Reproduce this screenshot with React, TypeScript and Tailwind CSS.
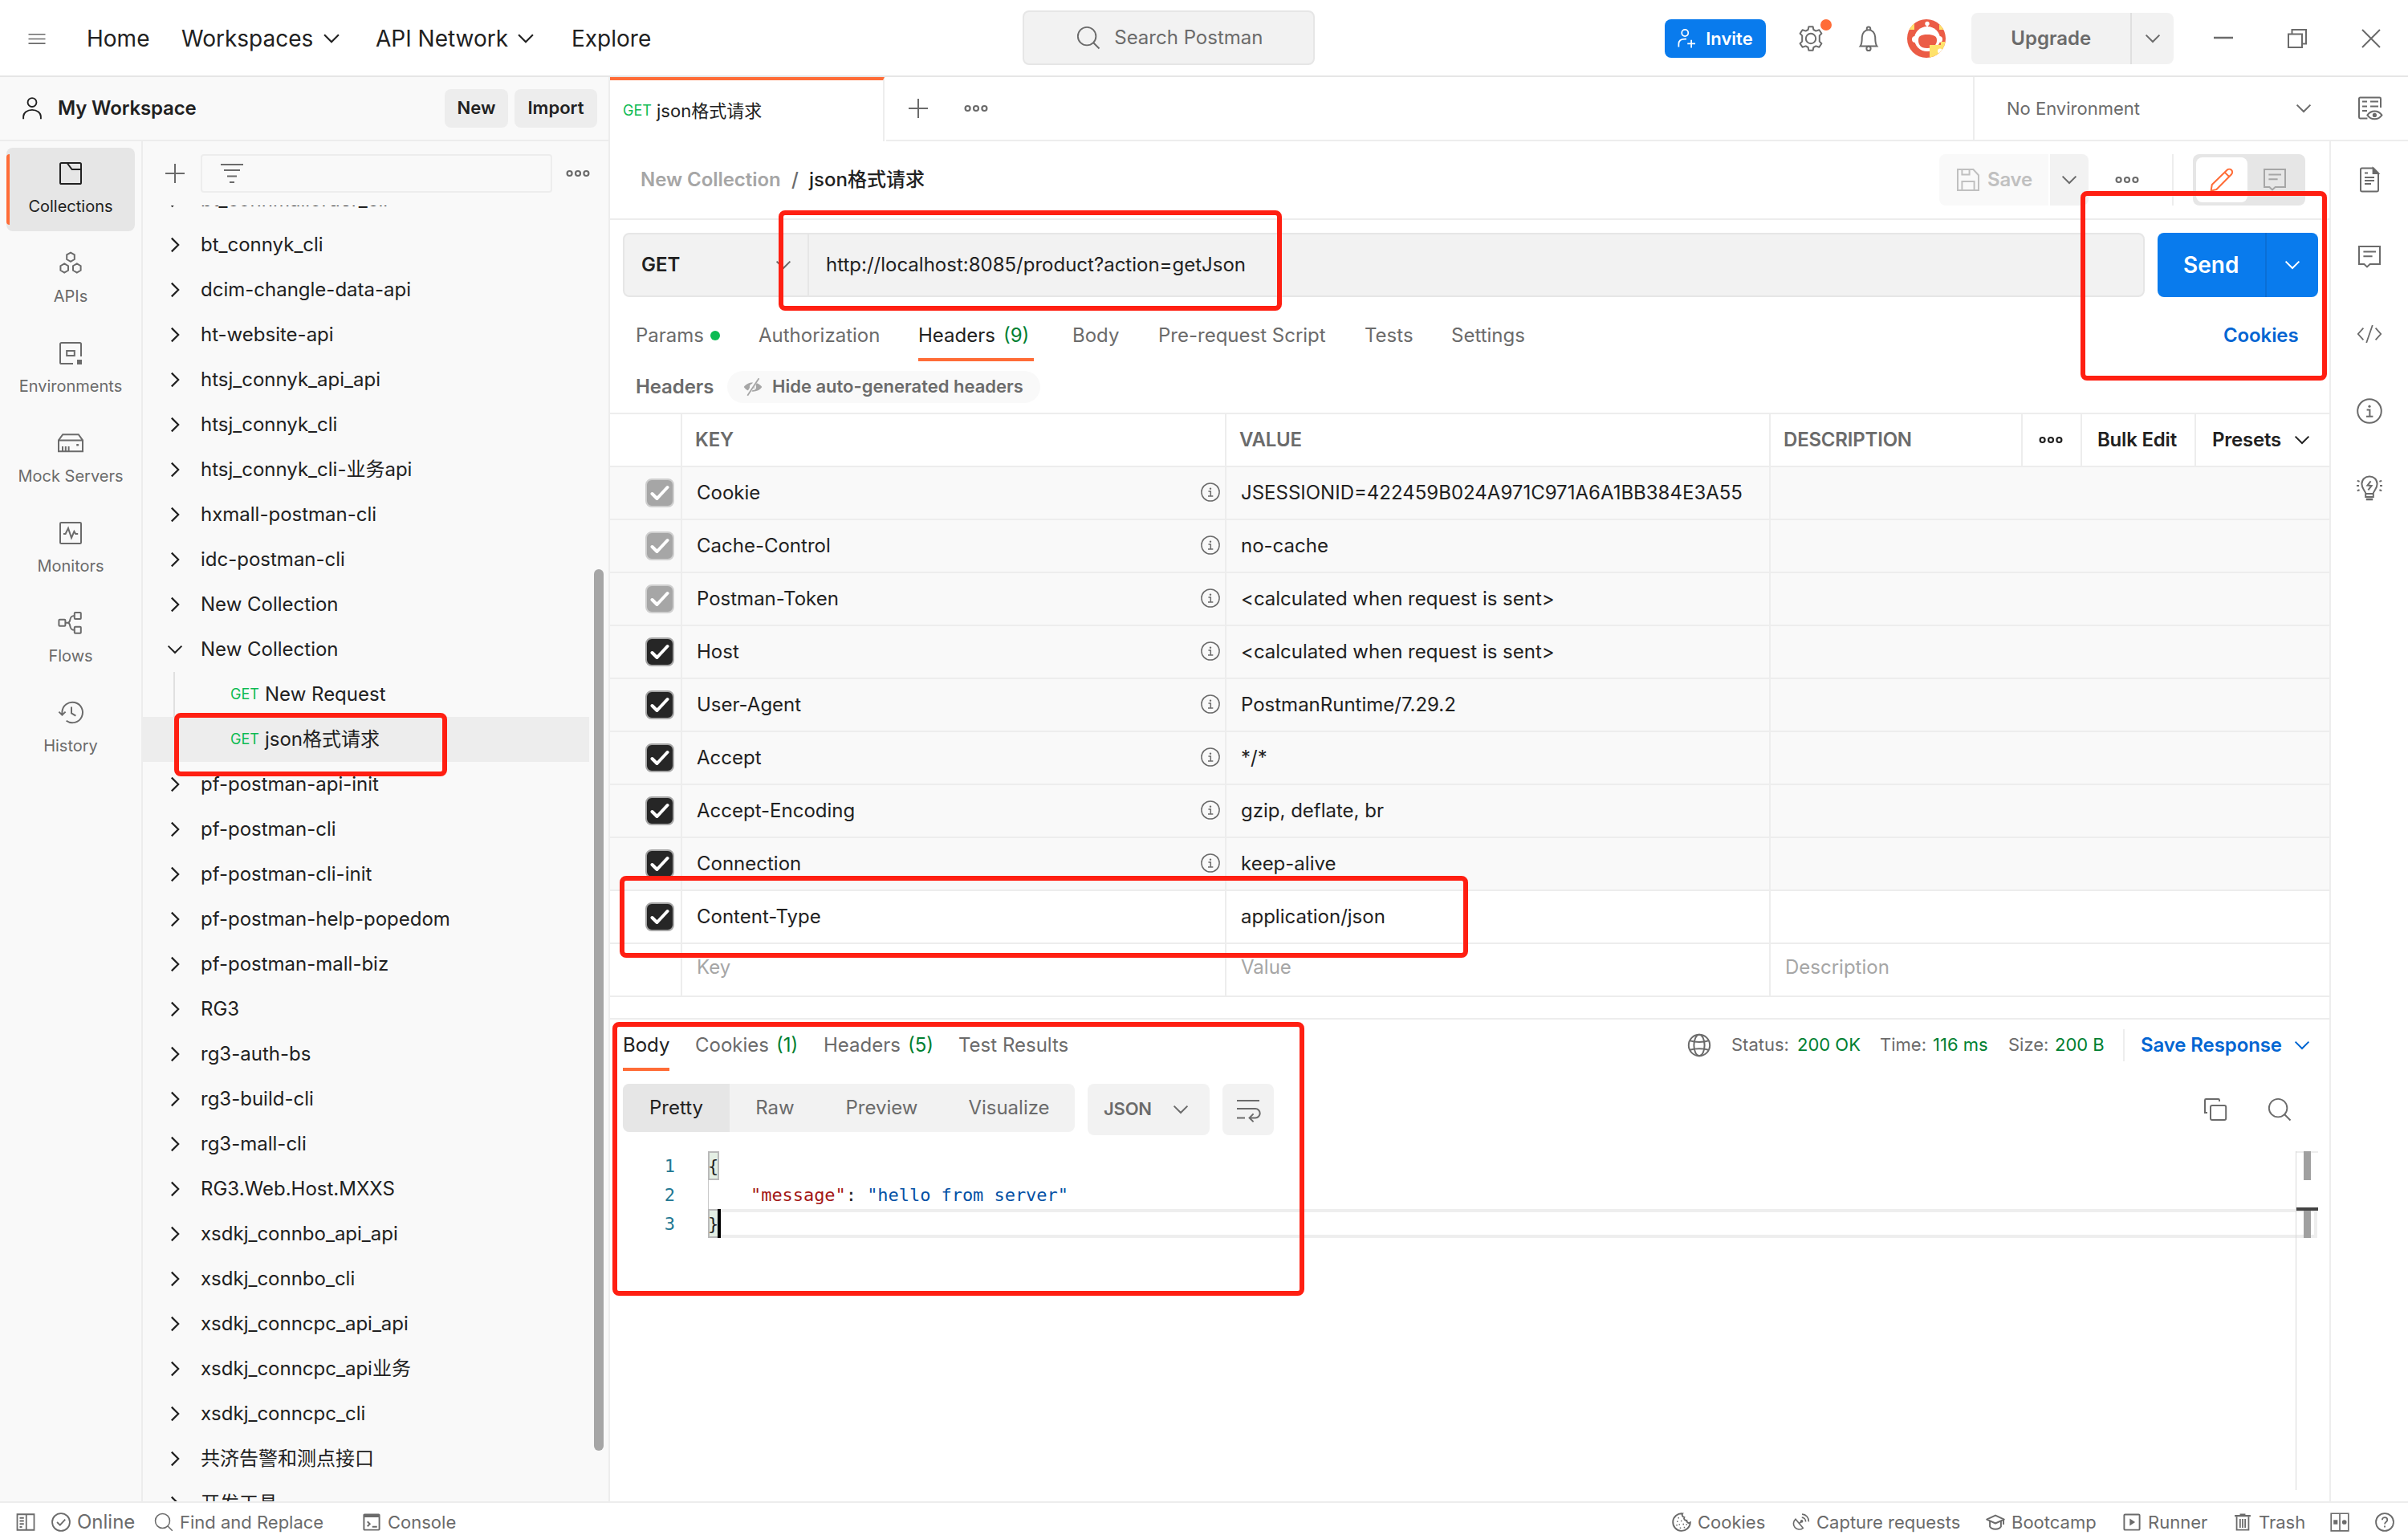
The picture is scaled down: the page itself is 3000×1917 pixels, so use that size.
import type { ReactNode } from 'react';
import clsx from 'clsx';

const navItems = [
  { label: 'Collections', icon: 'collections', active: true },
  { label: 'APIs', icon: 'apis' },
  { label: 'Environments', icon: 'environments' },
  { label: 'Mock Servers', icon: 'mock' },
  { label: 'Monitors', icon: 'monitors' },
  { label: 'Flows', icon: 'flows' },
  { label: 'History', icon: 'history' },
];

const collectionsBefore = [
  'bt_connmallorder_cli',
  'bt_connyk_cli',
  'dcim-changle-data-api',
  'ht-website-api',
  'htsj_connyk_api_api',
  'htsj_connyk_cli',
  'htsj_connyk_cli-业务api',
  'hxmall-postman-cli',
  'idc-postman-cli',
  'New Collection',
];

const collectionsAfter = [
  'pf-postman-api-init',
  'pf-postman-cli',
  'pf-postman-cli-init',
  'pf-postman-help-popedom',
  'pf-postman-mall-biz',
  'RG3',
  'rg3-auth-bs',
  'rg3-build-cli',
  'rg3-mall-cli',
  'RG3.Web.Host.MXXS',
  'xsdkj_connbo_api_api',
  'xsdkj_connbo_cli',
  'xsdkj_conncpc_api_api',
  'xsdkj_conncpc_api业务',
  'xsdkj_conncpc_cli',
  '共济告警和测点接口',
  '开发工具',
];

const headers = [
  { key: 'Cookie', value: 'JSESSIONID=422459B024A971C971A6A1BB384E3A55', auto: true, locked: true },
  { key: 'Cache-Control', value: 'no-cache', auto: true, locked: true },
  { key: 'Postman-Token', value: '<calculated when request is sent>', auto: true, locked: true },
  { key: 'Host', value: '<calculated when request is sent>', auto: true },
  { key: 'User-Agent', value: 'PostmanRuntime/7.29.2', auto: true },
  { key: 'Accept', value: '*/*', auto: true },
  { key: 'Accept-Encoding', value: 'gzip, deflate, br', auto: true },
  { key: 'Connection', value: 'keep-alive', auto: true },
  { key: 'Content-Type', value: 'application/json' },
];

// All glyphs sit on a 16 unit grid, one unit is two pixels at the default size
const glyphs: Record<string, ReactNode> = {
  menu: <path d="M2 5h12M2 8.25h12M2 11.5h12" strokeWidth="0.9" />,
  down: <path d="M3.8 5.8 8 10l4.2-4.2" />,
  right: <path d="M5.9 3.8 10.1 8l-4.2 4.2" strokeWidth="1.1" />,
  plus: <path d="M8 2v12M2 8h12" />,
  dots: (
    <>
      <circle cx="2.8" cy="8" r="1.5" strokeWidth="1.1" />
      <circle cx="8" cy="8" r="1.5" strokeWidth="1.1" />
      <circle cx="13.2" cy="8" r="1.5" strokeWidth="1.1" />
    </>
  ),
  search: (
    <>
      <circle cx="7" cy="7" r="6" />
      <path d="m11.2 11.2 4 4" />
    </>
  ),
  person: (
    <>
      <circle cx="8" cy="4" r="2.9" />
      <path d="M2.2 15v-1.500a5.800 4.500 0 0 1 11.600 0V15" />
    </>
  ),
  invite: (
    <>
      <circle cx="7" cy="4" r="2.300" />
      <path d="M2.500 14v-2.200C2.500 9.500 4 8.300 7 8.300h1M11.500 9v5.500M8.700 11.700h5.600" />
    </>
  ),
  gear: (
    <>
      <circle cx="8" cy="8" r="3.100" />
      <path
        strokeLinejoin="round"
        d="M6.700.6h2.600l.4 1.900 1.500.8 2-.7 1.500 2.300-1.300 1.300v3.600l1.300 1.300-1.500 2.300-2-.7-1.500.8-.4 1.900H6.700l-.4-1.900-1.500-.8-2 .7-1.500-2.300 1.300-1.300V6.200L1.300 4.900l1.500-2.300 2 .7 1.500-.8z"
      />
    </>
  ),
  bell: (
    <>
      <path d="M2.800 12.800c1.200-1.600 1-3.400 1.100-5.800C4 4.700 5.600 2.600 8 2.600s4 2.100 4.100 4.400c.1 2.400-.1 4.200 1.100 5.800z" />
      <path d="M6.900 2.600v-.8a1.100 1.100 0 0 1 2.200 0v.8" />
      <circle cx="8" cy="14.200" r="1.300" />
    </>
  ),
  filter: <path d="M1 2.500h14M3 6h10M5 9.700h6M6.500 13.500h3" />,
  collections: (
    <>
      <rect x="1.500" y="1.500" width="13" height="13" rx="0.8" />
      <path d="m5.800 1.500 3 4h5.700" />
    </>
  ),
  apis: (
    <>
      <path d="m8 1.300 2.400 1.400v2.800L8 6.900 5.600 5.500V2.700zM4.100 8.200l2.400 1.400v2.800l-2.400 1.400-2.400-1.400V9.600zM11.900 8.200l2.400 1.400v2.800l-2.400 1.400-2.400-1.400V9.600z" />
    </>
  ),
  environments: (
    <>
      <path d="M9.500 14.500h-7.200a.8.8 0 0 1-.8-.8V2.300a.8.8 0 0 1 .8-.8h11.400a.8.8 0 0 1 .8.8V10" />
      <rect x="5.600" y="6.500" width="4.800" height="3" />
      <rect x="12" y="12" width="3" height="3" fill="currentColor" stroke="none" />
    </>
  ),
  mock: (
    <path d="M.5 6.200 3.100 2.600h9.800l2.600 3.600v6.900H.5zM.5 6.300h15M3 13v-3M4.900 13v-3M6.800 13v-3M12.200 8.500v1.300M11.600 9.100h1.500" />
  ),
  monitors: (
    <>
      <rect x="1.500" y="1.500" width="13" height="13" rx="0.6" />
      <path d="M3.500 8.500h1.300L6.500 5l2 6 1.700-4 .9 1.500h1.500" />
    </>
  ),
  flows: (
    <>
      <rect x="0.700" y="5.900" width="4" height="4" rx="0.5" />
      <rect x="10.400" y="1.500" width="4" height="4" rx="0.5" />
      <rect x="10.400" y="10.400" width="4" height="4" rx="0.5" />
      <path d="M4.700 7.900h2.600M10.400 3.500c-4.200 0-1.600 4.400-4.200 4.400 2.600 0 0 4.500 4.200 4.500" />
    </>
  ),
  history: (
    <>
      <path d="M2.700 9.300V7.500a6.400 6.400 0 1 1 2.600 5.400M.7 7.300l2 2 2.100-2M8.500 4.200v4l2.700 1.600" />
    </>
  ),
  envQuick: (
    <>
      <path d="M15 7.500V2a.7.7 0 0 0-.7-.7H2.200a.7.7 0 0 0-.7.700v11.500c0 .4.300.7.700.7h4.500M3.500 3.800h3M8.500 3.800h5M3.500 6.700h3M8.500 6.700h5M3.500 9.500h3" />
      <path d="M6.700 12.200c2.200-3.300 6.800-3.300 9 0-2.200 3.300-6.800 3.300-9 0z" />
      <circle cx="11.200" cy="12.200" r="1.300" fill="currentColor" stroke="none" />
    </>
  ),
  doc: (
    <>
      <path d="M10.500.8H3.200a.7.7 0 0 0-.7.7v13c0 .4.300.7.7.7h9.600c.4 0 .7-.3.7-.7V3.800z" />
      <path d="M10.300.8v3.200h3.200z" fill="currentColor" />
      <path d="M5 3.800h2M5 6.500h6M5 8.500h6M5 10.500h4" />
    </>
  ),
  comment: (
    <path d="M1.500 1.500h13v11H8.300l-1.800 1.700-1.800-1.700H1.500zM4.200 4.800h7.800M4.200 7.600h5.600" />
  ),
  code: <path d="M4.200 4.300.9 8l3.300 3.700M11.800 4.300 15.100 8l-3.300 3.700M9.900 2.500l-3.800 11" strokeWidth="0.9" />,
  info: (
    <>
      <circle cx="8" cy="8" r="7.400" />
      <path d="M6.300 7.300h1.900v4M6 11.400h4.200" />
      <circle cx="8" cy="5.100" r="0.800" fill="currentColor" stroke="none" />
    </>
  ),
  bulb: (
    <>
      <path d="M5.700 11.500C5.500 9.800 3.200 8.500 3.200 5.400A4.700 4.700 0 0 1 8 .7a4.700 4.700 0 0 1 4.800 4.700c0 3.100-2.300 4.400-2.500 6.100zM5.600 11.500h4.800v2H5.600z" />
      <path d="M5.900 15h4.200" strokeWidth="1.300" />
      <path d="M8.800 3.700 6.700 6.300l2.600.2-2.100 2.700M.4 3.300l1.400.6M0 6.500h1.500M.4 9.600l1.400-.5M15.600 3.300l-1.400.6M16 6.500h-1.500M15.600 9.600l-1.400-.5" />
    </>
  ),
  save: (
    <path d="M1.500 1.500h9.700l3.300 3.600v9.400h-13zM4.200 1.500v3.300h4.600V1.500M4.200 14.500V9h7.600v5.500" />
  ),
  pencil: (
    <path d="m1.300 14.800.6-3.800L11.300 1.900a1.900 1.900 0 0 1 2.700 2.700L4.700 14zM9.800 3.300l2.800 2.700" strokeLinejoin="round" />
  ),
  eyeOff: (
    <>
      <path d="M.5 8C3.500 3 12.500 3 15.500 8c-3 5-12 5-15 0z" fill="currentColor" stroke="none" />
      <circle cx="8" cy="8" r="2.700" fill="#f9f9f9" stroke="none" />
      <circle cx="8" cy="8" r="1.600" fill="currentColor" stroke="none" />
      <path d="M12 .5 3 15.500" stroke="#f9f9f9" strokeWidth="3" />
      <path d="M13 .8 3.500 15.200" strokeWidth="1.200" />
    </>
  ),
  wrap: <path d="M1 2.500h14M1 7.500h11.500a2.600 2.600 0 0 1 0 5.700H9M1 13.200h5M11.300 10.700 8.800 13.200l2.500 2.500" />,
  globe: (
    <>
      <circle cx="8" cy="8" r="6.600" />
      <ellipse cx="8" cy="8" rx="3.300" ry="6.600" />
      <path d="M2.300 5.200c3 1 8.400 1 11.400 0M2.300 10.900c3-1 8.400-1 11.400 0" />
    </>
  ),
  copy: (
    <>
      <path d="M3 10H1.500V2.200c0-.4.300-.7.700-.7h7.600c.4 0 .7.300.7.700V3" />
      <rect x="5" y="5.500" width="9.600" height="9" rx="1" />
    </>
  ),
  panel: (
    <path d="M1 1.500h14v13H1zM8.500 1.500v13M3 4.500h3.500M3 7h3.500M3 9.500h3.500M3 12h2" strokeWidth="1.200" />
  ),
  check: (
    <>
      <circle cx="8" cy="8" r="7.300" strokeWidth="1.200" />
      <path d="m4.700 8 2.500 2.400L11.500 5.800" strokeWidth="1.200" />
    </>
  ),
  console: (
    <>
      <rect x="1.600" y="1.600" width="12.800" height="12.800" rx="0.500" strokeWidth="1.300" />
      <path d="M1.500 3h13" strokeWidth="2" />
      <path d="m4.500 7.500 2 2-2 2M8.500 11.800h4" strokeWidth="1.300" />
    </>
  ),
  cookie: (
    <>
      <path
        d="M8.800.9A7.200 7.200 0 1 0 15.200 8.300c-1.300.8-3-.1-3-1.700-1.700.1-2.600-1.500-2-2.600C8.700 3.600 8 2.200 8.800.9z"
        strokeWidth="1.300"
      />
      <path
        d="M5 4.500h1M7.300 7h1M4 7.500h1M5.700 10h1M9 9.700h1M3.500 10.500h1M6.500 12.800h1M9.800 12.400h1M11.700 10h1"
        strokeWidth="1.100"
      />
    </>
  ),
  capture: (
    <>
      <path d="M3.600 5.300a5.200 5.200 0 1 0 6.800 8zM7.200 9l2-2" strokeWidth="1.200" />
      <circle cx="9.200" cy="7.200" r="1.300" fill="currentColor" stroke="none" />
      <path d="M9.300 3.700a3.800 3.800 0 0 1 3.500 3.900M9.500.8a6.200 6.200 0 0 1 6 6.800" strokeWidth="1.200" />
    </>
  ),
  bootcamp: (
    <>
      <path d="M8 2.400.8 5.700 8 9l7.200-3.300z" strokeWidth="1.300" strokeLinejoin="round" />
      <path d="M3.400 7.200v4.500c1.500 2.800 7.700 2.800 9.200 0V7.200M14.700 6v4" strokeWidth="1.300" />
    </>
  ),
  runner: (
    <>
      <rect x="1.600" y="1.600" width="12.800" height="12.800" rx="0.800" strokeWidth="1.300" />
      <path d="M6.200 5v6l4.500-3z" fill="currentColor" stroke="none" />
    </>
  ),
  trash: (
    <>
      <path d="M.8 2.200h14.400M5.500 1.200h5" strokeWidth="1.600" />
      <path d="M2.600 3v12h10.800V3M5.700 5v8M8 5v8M10.300 5v8" strokeWidth="1.300" />
    </>
  ),
  split: (
    <>
      <path d="M.8.800h14.400v14.400H.8zM8 .8v14.400" strokeWidth="1.100" />
      <rect x="2.800" y="6.200" width="3.400" height="3.600" fill="currentColor" stroke="none" />
      <circle cx="11.800" cy="8" r="1.900" fill="currentColor" stroke="none" />
    </>
  ),
  help: (
    <>
      <circle cx="8" cy="8" r="7.300" strokeWidth="1.200" />
      <path d="M5.900 6.200c0-2.800 4.300-2.700 4.300-.1 0 1.700-2.200 1.700-2.200 3.500M8 11v1.300" strokeWidth="1.200" />
    </>
  ),
};

function Icon({ name, className }: { name: string; className?: string }) {
  return (
    <svg
      viewBox="0 0 16 16"
      fill="none"
      stroke="currentColor"
      strokeWidth="1"
      className={clsx('shrink-0 overflow-visible', className ?? 'size-8')}
    >
      {glyphs[name]}
    </svg>
  );
}

function Avatar() {
  return (
    <svg viewBox="0 0 48 48" className="size-12 shrink-0">
      <clipPath id="avatar">
        <circle cx="24" cy="24" r="24" />
      </clipPath>
      <g clipPath="url(#avatar)">
        <rect width="48" height="48" fill="#eb5c46" />
        <rect width="9" height="13" fill="#ffe26b" />
        <rect x="40" width="8" height="13" fill="#ffe26b" />
        <ellipse cx="25" cy="24.500" rx="16" ry="15.500" fill="#fff" />
        <rect x="6" y="21" width="38" height="8" rx="4" fill="#fff" />
        <circle cx="25" cy="5.500" r="2.700" fill="#fff" />
        <path d="M24.200 5h1.600v6h-1.600z" fill="#fff" />
        <path d="M14 26c0-5 3-7 11-7s12 2 12 7-3 10-12 10-11-5-11-10z" fill="#eb5c46" />
        <path d="M28 32h14v-4h6v20H28z" fill="#ffe26b" />
        <circle cx="41" cy="39.500" r="3" fill="#fff" />
      </g>
    </svg>
  );
}

function TopBar() {
  return (
    <header className="flex h-24 shrink-0 items-center border-b-2 border-[#e6e6e6] pt-0.5 text-[28px]">
      <Icon name="menu" className="ml-8 h-7 w-7 text-[#6b6b6b]" />
      <span className="ml-12 w-[118px]">Home</span>
      <span className="w-[170px]">Workspaces</span>
      <Icon name="down" className="size-[34px]" />
      <span className="ml-[38px] w-[170px]">API Network</span>
      <Icon name="down" className="size-[34px]" />
      <span className="ml-10">Explore</span>

      <div className="mt-[-2px] ml-[463px] flex h-[68px] w-[364px] items-center rounded-lg border-2 border-[#e6e6e6] bg-[#f2f2f2] pl-[65px] text-2xl text-[#6b6b6b]">
        <Icon name="search" className="size-[30px]" />
        <span className="ml-[17px]">Search Postman</span>
      </div>

      <div className="ml-[436px] flex h-12 w-[126px] items-center rounded-lg bg-[#097bed] pl-[13px] text-[22px] font-semibold text-white">
        <Icon name="invite" className="size-[28px]" />
        <span className="ml-2.5">Invite</span>
      </div>
      <div className="relative ml-10 text-[#6b6b6b]">
        <Icon name="gear" />
        <span className="absolute -top-2 left-7 size-3.5 rounded-full bg-[#ff6c37]" />
      </div>
      <Icon name="bell" className="ml-10 size-8 text-[#6b6b6b]" />
      <div className="ml-8">
        <Avatar />
      </div>
      <div className="ml-8 flex h-16 w-[252px] items-center rounded-lg bg-[#f2f2f2] text-2xl font-semibold text-[#6b6b6b]">
        <span className="w-[198px] text-center">Upgrade</span>
        <span className="flex h-16 flex-1 items-center justify-center border-l-2 border-[#e0e0e0]">
          <Icon name="down" />
        </span>
      </div>
      <svg viewBox="0 0 24 24" className="ml-[50px] size-6" stroke="#6b6b6b" strokeWidth="2" fill="none">
        <path d="M0 11h24" strokeWidth="2.500" />
      </svg>
      <svg viewBox="0 0 24 24" className="ml-[68px] size-6" stroke="#6b6b6b" strokeWidth="2" fill="none">
        <path d="M1 6.500h17V23H1zM5.500 6V1H23v17.500h-4.500" />
      </svg>
      <svg viewBox="0 0 24 24" className="ml-[68px] size-6" stroke="#6b6b6b" strokeWidth="2" fill="none">
        <path d="m1 1 22 22M23 1 1 23" />
      </svg>
    </header>
  );
}

function NavRail() {
  return (
    <nav className="flex w-[178px] shrink-0 flex-col gap-2 border-r-2 border-[#ededed] pt-2 pl-2">
      {navItems.map((item) => (
        <div
          key={item.label}
          className={clsx(
            'relative flex h-[104px] w-40 flex-col items-center rounded-lg pt-4 text-xl',
            item.active ? 'bg-[#e6e6e6] text-[#212121]' : 'text-[#6b6b6b]'
          )}
        >
          {item.active && <span className="absolute top-2 bottom-2 left-0 w-1 rounded-l bg-[#ff6c37]" />}
          <Icon name={item.icon} />
          <span className="mt-[11px] leading-7">{item.label}</span>
        </div>
      ))}
    </nav>
  );
}

function TreeRow({ name, open }: { name: string; open?: boolean }) {
  return (
    <div className="flex h-14 shrink-0 items-center pl-6">
      <Icon name={open ? 'down' : 'right'} />
      <span className="ml-4">{name}</span>
    </div>
  );
}

function RequestRow({ name, selected }: { name: string; selected?: boolean }) {
  return (
    <div className={clsx('flex h-14 w-[556px] shrink-0 items-center pl-[38px]', selected && 'bg-[#ededed]')}>
      <span className={clsx('h-14 w-[71px] border-l-2', selected ? 'border-transparent' : 'border-[#e0e0e0]')} />
      <span className="w-[43px] text-lg text-[#0cbb52]">GET</span>
      <span>{name}</span>
    </div>
  );
}

function Sidebar() {
  return (
    <aside className="flex w-[760px] shrink-0 flex-col border-r-2 border-[#ededed] bg-[#f9f9f9]">
      <div className="flex h-20 shrink-0 items-center border-b-2 border-[#ededed] text-2xl font-semibold">
        <Icon name="person" className="ml-[25px] size-[30px]" />
        <span className="ml-[17px] w-[482px] tracking-[-0.15px]">My Workspace</span>
        <span className="flex h-12 w-[79px] items-center justify-center rounded-lg bg-[#ededed] text-[22px]">New</span>
        <span className="ml-2 flex h-12 w-[103px] items-center justify-center rounded-lg bg-[#ededed] text-[22px]">
          Import
        </span>
      </div>
      <div className="flex min-h-0 flex-1">
        <NavRail />
        <div className="flex min-w-0 flex-1 flex-col">
          <div className="flex h-20 shrink-0 items-center pl-6 text-[#6b6b6b]">
            <Icon name="plus" />
            <div className="ml-4 flex h-12 w-[438px] items-center rounded border-2 border-[#ededed] pl-[21px]">
              <Icon name="filter" className="size-8" />
            </div>
            <Icon name="dots" className="ml-4 size-8" />
          </div>
          <div className="relative flex min-h-0 flex-1 overflow-hidden">
            <div className="mt-[-35px] flex flex-1 flex-col text-2xl text-[#212121]">
              {collectionsBefore.map((name) => (
                <TreeRow key={name} name={name} />
              ))}
              <TreeRow name="New Collection" open />
              <RequestRow name="New Request" />
              <RequestRow name="json格式请求" selected />
              {collectionsAfter.map((name) => (
                <TreeRow key={name} name={name} />
              ))}
            </div>
            <div className="absolute top-[453px] right-1.5 h-[1098px] w-3 rounded-full bg-[#a6a6a6]" />
          </div>
        </div>
      </div>
    </aside>
  );
}

function TabBar() {
  return (
    <div className="flex h-20 shrink-0">
      <div className="flex w-[342px] items-center border-t-4 border-r-2 border-t-[#ff6c37] border-r-[#ededed] pl-4">
        <span className="w-[42px] text-lg text-[#0cbb52]">GET</span>
        <span className="text-[22px]">json格式请求</span>
      </div>
      <div className="ml-0.5 flex flex-1 items-center border-b-2 border-[#ededed] text-[#6b6b6b]">
        <Icon name="plus" className="ml-6 size-8" />
        <Icon name="dots" className="ml-10 size-8" />
        <div className="ml-[1226px] flex h-full w-[466px] items-center border-l-2 border-[#ededed] pl-10 text-[22px]">
          <span className="w-[354px]">No Environment</span>
          <Icon name="down" />
        </div>
        <Icon name="envQuick" className="ml-3 size-8" />
      </div>
    </div>
  );
}

function Breadcrumb() {
  return (
    <div className="flex h-[98px] shrink-0 items-center border-b-2 border-[#ededed] pl-[38px] text-2xl font-semibold">
      <span className="w-[188px] tracking-[-0.05px] text-[#a6a6a6]">New Collection</span>
      <span className="w-[22px] font-medium text-[#6b6b6b]">/</span>
      <span className="w-[1408px] font-medium">json格式请求</span>
      <div className="flex h-16 w-[136px] items-center rounded-l-lg bg-[#f9f9f9] pl-5 text-[#c0c0c0]">
        <Icon name="save" />
        <span className="ml-2 tracking-[-0.2px]">Save</span>
      </div>
      <div className="ml-0.5 flex h-16 w-12 items-center justify-center rounded-r-lg bg-[#f2f2f2] text-[#6b6b6b]">
        <Icon name="down" />
      </div>
      <Icon name="dots" className="ml-8 size-8 text-[#6b6b6b]" />
      <div className="ml-10 h-16 w-0.5 bg-[#ededed]" />
      <div className="ml-6 flex h-16 w-[140px] items-center rounded-lg bg-[#e6e6e6]">
        <div className="ml-1 flex h-14 w-16 items-center justify-center rounded-lg bg-white text-[#ff6c37]">
          <Icon name="pencil" />
        </div>
        <Icon name="comment" className="ml-[18px] size-8 text-[#a6a6a6]" />
      </div>
    </div>
  );
}

function RequestLine() {
  return (
    <div className="flex h-24 shrink-0 pt-4 pl-4">
      <div className="flex h-20 w-[1896px] items-center rounded-lg border-2 border-[#e6e6e6] bg-[#f2f2f2] text-2xl">
        <span className="w-[182px] pl-[21px] font-semibold">GET</span>
        <Icon name="down" className="size-8 text-[#6b6b6b]" />
        <span className="ml-3.5 flex h-full items-center border-l-2 border-[#e6e6e6] pl-[21px]">
          http://localhost:8085/product?action=getJson
        </span>
      </div>
      <div className="ml-4 flex h-20 w-[200px] items-center rounded-lg bg-[#097bed] text-[28px] font-semibold text-white">
        <span className="w-[134px] pl-8">Send</span>
        <span className="flex h-full flex-1 items-center border-l-2 border-[#0a6fd6] pl-4">
          <Icon name="down" />
        </span>
      </div>
    </div>
  );
}

const requestTabs = [
  { label: 'Params', width: 'w-[153px]', dot: true },
  { label: 'Authorization', width: 'w-[199px]' },
  { label: 'Headers', width: 'w-36 mr-12', count: 9, active: true },
  { label: 'Body', width: 'w-[107px]' },
  { label: 'Pre-request Script', width: 'w-[257px]' },
  { label: 'Tests', width: 'w-[108px]' },
  { label: 'Settings', width: 'w-[962px]' },
];

function RequestTabs() {
  return (
    <div className="flex h-20 shrink-0 pl-8 text-2xl text-[#6b6b6b]">
      {requestTabs.map((tab) => (
        <span
          key={tab.label}
          className={clsx(
            'flex items-center border-b-4 pt-5',
            tab.width,
            tab.active ? 'border-[#ff6c37] text-[#212121]' : 'border-transparent'
          )}
        >
          {tab.label}
          {tab.dot && <i className="ml-2 size-3 rounded-full bg-[#0cbb52]" />}
          {tab.count && <span className="ml-2.5 text-[#007f31]">({tab.count})</span>}
        </span>
      ))}
      <span className="flex items-center border-b-4 border-transparent pt-5 font-semibold tracking-[-0.1px] text-[#0265d2]">
        Cookies
      </span>
    </div>
  );
}

function Checkbox({ locked }: { locked?: boolean }) {
  return (
    <span
      className={clsx(
        'flex size-9 items-center justify-center rounded-lg border-2',
        locked ? 'border-[#cfcfcf] bg-[#a6a6a6]' : 'border-[#a6a6a6] bg-[#262626]'
      )}
    >
      <svg viewBox="0 0 24 24" className="size-6" fill="none" stroke="#fff" strokeWidth="4" strokeLinecap="round">
        <path d="m2.500 13 6 6L21.500 5" strokeLinejoin="round" />
      </svg>
    </span>
  );
}

function HeadersTable() {
  const row = 'grid h-[66px] grid-cols-[90px_678px_678px_1fr] border-b-2 border-[#ededed]';
  const cell = 'flex items-center border-r-2 border-[#ededed]';
  return (
    <div className="shrink-0 border-t-2 border-[#ededed] text-2xl">
      <div className={clsx(row, 'font-semibold tracking-[-0.2px] text-[#6b6b6b]')}>
        <span className={cell} />
        <span className={clsx(cell, 'pl-4')}>KEY</span>
        <span className={clsx(cell, 'pl-4')}>VALUE</span>
        <div className="flex text-[#212121]">
          <span className={clsx(cell, 'w-[314px] pl-4 text-[#6b6b6b]')}>DESCRIPTION</span>
          <span className={clsx(cell, 'w-[74px] pl-[19px]')}>
            <Icon name="dots" />
          </span>
          <span className={clsx(cell, 'w-[142px] pl-[19px]')}>Bulk Edit</span>
          <span className="flex items-center pl-5">
            <span className="w-[96px]">Presets</span>
            <Icon name="down" />
          </span>
        </div>
      </div>
      {headers.map((h) => (
        <div key={h.key} className={clsx(row, h.auto && 'bg-[#f9f9f9]')}>
          <span className={clsx(cell, 'pl-11')}>
            <Checkbox locked={h.locked} />
          </span>
          <span className={clsx(cell, 'justify-between pr-1.5 pl-[18px]')}>
            {h.key}
            {h.auto && <Icon name="info" className="mb-0.5 size-6 text-[#6b6b6b]" />}
          </span>
          <span className={clsx(cell, 'pl-[18px]')}>{h.value}</span>
          <span />
        </div>
      ))}
      <div className={clsx(row, 'text-[#a6a6a6]')}>
        <span className={cell} />
        <span className={clsx(cell, 'pb-1.5 pl-[18px]')}>Key</span>
        <span className={clsx(cell, 'pb-1.5 pl-[18px]')}>Value</span>
        <span className="flex items-center pb-1.5 pl-[18px]">Description</span>
      </div>
    </div>
  );
}

function ResponseBar() {
  return (
    <div className="mt-[26px] flex h-[66px] shrink-0 border-t-2 border-[#ededed] pl-4 text-2xl text-[#6b6b6b]">
      <span className="mr-8 flex w-[58px] items-center border-b-4 border-[#ff6c37] pt-1 text-[#212121]">Body</span>
      <span className="flex w-[160px] items-center">
        Cookies <span className="ml-[9px] text-[#007f31]">(1)</span>
      </span>
      <span className="flex w-[168px] items-center">
        Headers <span className="ml-[9px] text-[#007f31]">(5)</span>
      </span>
      <span className="flex w-[907px] items-center">Test Results</span>
      <div className="flex items-center text-[22px]">
        <Icon name="globe" />
        <span className="ml-6 w-[82px]">Status:</span>
        <span className="w-[103px] text-[#007f31]">200 OK</span>
        <span className="w-[66px]">Time:</span>
        <span className="w-[94px] text-[#007f31]">116 ms</span>
        <span className="w-[58px]">Size:</span>
        <span className="w-[85px] text-[#007f31]">200 B</span>
        <span className="h-10 w-0.5 bg-[#ededed]" />
        <span className="ml-5 w-[185px] text-2xl font-semibold tracking-[-0.1px] text-[#0265d2]">Save Response</span>
        <Icon name="down" className="size-8 text-[#0265d2]" />
      </div>
    </div>
  );
}

function ResponseTools() {
  return (
    <div className="mt-4 flex h-16 shrink-0 items-center pl-4 text-2xl text-[#6b6b6b]">
      <div className="mb-1 flex h-[60px] w-[563px] overflow-hidden rounded-lg bg-[#f2f2f2] *:flex *:items-center *:justify-center">
        <span className="w-[133px] bg-[#e6e6e6] text-[#212121]">Pretty</span>
        <span className="w-[113px]">Raw</span>
        <span className="w-[153px]">Preview</span>
        <span className="w-[164px]">Visualize</span>
      </div>
      <div className="ml-4 flex h-16 w-[152px] items-center rounded-lg bg-[#f2f2f2] pl-5 text-[22px] font-semibold tracking-[-0.2px]">
        <span className="w-20">JSON</span>
        <Icon name="down" />
      </div>
      <div className="ml-4 flex size-16 items-center justify-center rounded-lg bg-[#f2f2f2]">
        <Icon name="wrap" />
      </div>
      <Icon name="copy" className="ml-[1157px] size-8" />
      <Icon name="search" className="ml-[49px] size-[30px]" />
    </div>
  );
}

function CodeView() {
  return (
    <div className="relative mt-5 h-[422px] shrink-0 font-['DejaVu_Sans_Mono',monospace] text-[22px] leading-[38px] tracking-[-0.05px]">
      <div className="flex h-9">
        <span className="w-[81px] text-right text-[#237893]">1</span>
        <span className="ml-[41px] w-[14px] border-2 border-[#b9b9b9] bg-[#e4efe4] leading-[33px]">
          <span className="-ml-0.5">{'{'}</span>
        </span>
      </div>
      <div className="flex h-9">
        <span className="w-[81px] text-right text-[#237893]">2</span>
        <span className="ml-[41px] w-[53px] border-l border-[#c8c8c8]" />
        <span className="text-[#a31515]">"message"</span>
        <span>:&nbsp;</span>
        <span className="text-[#0451a5]">"hello from server"</span>
      </div>
      <div className="flex h-9">
        <span className="w-[81px] text-right text-[#237893]">3</span>
        <span className="ml-[41px] w-[12px] border-2 border-r-0 border-[#b9b9b9] bg-[#e4efe4] leading-[33px]">
          <span className="-ml-0.5">{'}'}</span>
        </span>
        <span className="z-10 w-1 bg-black" />
        <span className="w-[1989px] border-4 border-l-0 border-[#eeeeee]" />
      </div>
      {/* overview ruler */}
      <div className="absolute top-0 left-[2100px] h-full w-7 border-l border-[#d8d8d8]">
        <div className="h-0.5 bg-[#ededed]" />
        <span className="absolute top-0 left-[9px] h-9 w-[9px] bg-[#a0a0a0]" />
        <span className="absolute top-[72px] left-[9px] h-9 w-[9px] bg-[#a0a0a0]" />
        <span className="absolute top-[70px] left-0 h-1 w-[27px] bg-[#424242]" />
      </div>
    </div>
  );
}

function RightRail() {
  return (
    <div className="flex w-24 shrink-0 flex-col items-center gap-16 pt-8 text-[#6b6b6b]">
      <Icon name="doc" />
      <Icon name="comment" />
      <Icon name="code" />
      <Icon name="info" />
      <Icon name="bulb" />
    </div>
  );
}

function StatusBar() {
  return (
    <footer className="flex h-[47px] shrink-0 items-center border-t-2 border-[#ededed] pt-[3px] pl-5 text-[22px] text-[#6b6b6b]">
      <Icon name="panel" className="size-6" />
      <Icon name="check" className="ml-5 size-6" />
      <span className="ml-2 w-24 text-2xl">Online</span>
      <Icon name="search" className="size-6" />
      <span className="ml-2 w-[227px]">Find and Replace</span>
      <Icon name="console" className="size-6" />
      <span className="ml-2 w-[1600px]">Console</span>
      <Icon name="cookie" className="size-6" />
      <span className="ml-2 w-[117px]">Cookies</span>
      <Icon name="capture" className="size-[22px]" />
      <span className="ml-[9px] w-[211px]">Capture requests</span>
      <Icon name="bootcamp" className="size-6" />
      <span className="ml-2 w-[138px]">Bootcamp</span>
      <Icon name="runner" className="size-6" />
      <span className="ml-2 w-[107px]">Runner</span>
      <Icon name="trash" className="size-[22px]" />
      <span className="ml-[9px] w-[89px]">Trash</span>
      <Icon name="split" className="size-6" />
      <Icon name="help" className="ml-8 size-6" />
    </footer>
  );
}

export default function App() {
  return (
    <div className="relative flex h-[1917px] w-[3000px] flex-col overflow-hidden bg-white font-['Inter','Noto_Sans_CJK_SC',sans-serif] whitespace-nowrap text-[#212121]">
      <TopBar />
      <div className="flex h-[1774px] shrink-0">
        <Sidebar />
        <div className="flex w-[2240px] flex-col">
          <TabBar />
          <div className="flex min-h-0 flex-1">
            <main className="flex w-[2144px] shrink-0 flex-col border-r-2 border-[#ededed]">
              <Breadcrumb />
              <RequestLine />
              <RequestTabs />
              <div className="flex h-16 shrink-0 items-center pl-8 text-2xl font-semibold text-[#6b6b6b]">
                <span className="w-[114px] tracking-[-0.1px]">Headers</span>
                <span className="flex h-10 w-[390px] items-center rounded-full bg-[#f9f9f9] pl-5 text-[22px]">
                  <Icon name="eyeOff" className="size-6 text-[#a6a6a6]" />
                  <span className="ml-3">Hide auto-generated headers</span>
                </span>
              </div>
              <HeadersTable />
              <ResponseBar />
              <ResponseTools />
              <CodeView />
            </main>
            <RightRail />
          </div>
        </div>
      </div>
      <StatusBar />

      {/* red call-out frames drawn over the app */}
      <div className="absolute top-[888px] left-[217px] h-[79px] w-[340px] rounded-lg border-[6px] border-[#ff1f12]" />
      <div className="absolute top-[262px] left-[970px] h-[125px] w-[627px] rounded-lg border-[6px] border-[#ff1f12]" />
      <div className="absolute top-[238px] left-[2592px] h-[236px] w-[307px] rounded-lg border-[6px] border-[#ff1f12]" />
      <div className="absolute top-[1091px] left-[772px] h-[102px] w-[1057px] rounded-lg border-[6px] border-[#ff1f12]" />
      <div className="absolute top-[1273px] left-[763px] h-[341px] w-[862px] rounded-lg border-[6px] border-[#ff1f12]" />
    </div>
  );
}
